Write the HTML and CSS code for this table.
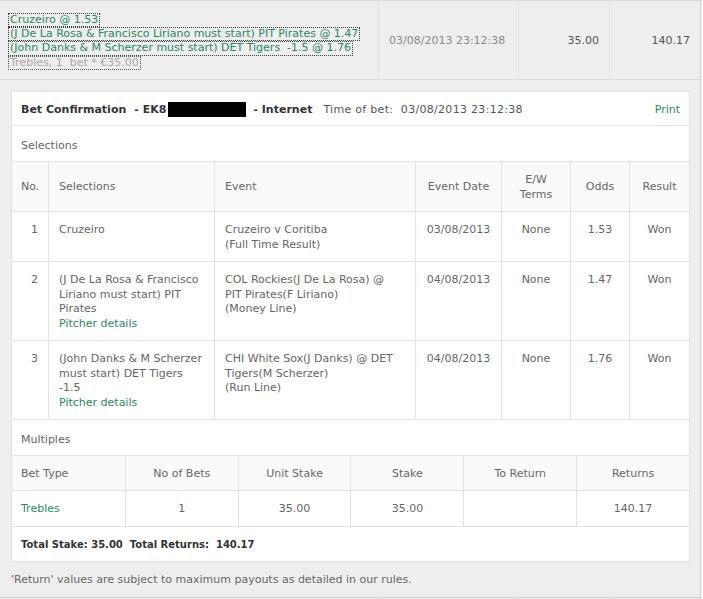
FILE: index.html
```html
<!DOCTYPE html>
<html lang="en">
<head>
<meta charset="utf-8">
<title>Bet history</title>
<link rel="stylesheet" href="styles.css">
</head>
<body>
<div class="board">
  <table class="bets">
    <colgroup>
      <col class="c-legs"><col class="c-date"><col class="c-amt"><col class="c-amt">
    </colgroup>
    <tr class="summary">
      <td class="legs">
        <a class="leg" href="#">Cruzeiro @ 1.53</a>
        <a class="leg" href="#">(J De La Rosa &amp; Francisco Liriano must start) PIT Pirates @ 1.47</a>
        <a class="leg" href="#">(John Danks &amp; M Scherzer must start) DET Tigers &nbsp;-1.5 @ 1.76</a>
        <span class="leg leg-type">Trebles, 1 &nbsp;bet * €35.00</span>
      </td>
      <td class="when">03/08/2013 23:12:38</td>
      <td class="amt">35.00</td>
      <td class="amt">140.17</td>
    </tr>
    <tr class="detail">
      <td colspan="4" class="detail-cell">
        <div class="confirm">
          <div class="confirm-head">
            <div class="title">
              <b>Bet Confirmation</b><b class="ref">- EK8</b><span class="redact"></span><b>- Internet</b><span class="time">Time of bet:&nbsp; 03/08/2013 23:12:38</span>
            </div>
            <a class="print" href="#">Print</a>
          </div>

          <div class="label">Selections</div>
          <table class="grid sel">
            <colgroup>
              <col class="w-no"><col class="w-sel"><col class="w-ev"><col class="w-date"><col class="w-ew"><col class="w-odds"><col class="w-res">
            </colgroup>
            <thead>
              <tr>
                <th class="left">No.</th>
                <th class="left">Selections</th>
                <th class="left">Event</th>
                <th>Event Date</th>
                <th>E/W<br>Terms</th>
                <th>Odds</th>
                <th>Result</th>
              </tr>
            </thead>
            <tbody>
              <tr>
                <td class="no">1</td>
                <td class="left">Cruzeiro</td>
                <td class="left">Cruzeiro v Coritiba<br>(Full Time Result)</td>
                <td>03/08/2013</td>
                <td>None</td>
                <td>1.53</td>
                <td>Won</td>
              </tr>
              <tr>
                <td class="no">2</td>
                <td class="left">(J De La Rosa &amp; Francisco Liriano must start) PIT Pirates<br><a class="link" href="#">Pitcher details</a></td>
                <td class="left">COL Rockies(J De La Rosa) @<br>PIT Pirates(F Liriano)<br>(Money Line)</td>
                <td>04/08/2013</td>
                <td>None</td>
                <td>1.47</td>
                <td>Won</td>
              </tr>
              <tr>
                <td class="no">3</td>
                <td class="left">(John Danks &amp; M Scherzer must start) DET Tigers<br>-1.5<br><a class="link" href="#">Pitcher details</a></td>
                <td class="left">CHI White Sox(J Danks) @ DET Tigers(M Scherzer)<br>(Run Line)</td>
                <td>04/08/2013</td>
                <td>None</td>
                <td>1.76</td>
                <td>Won</td>
              </tr>
            </tbody>
          </table>

          <div class="label">Multiples</div>
          <table class="grid mult">
            <thead>
              <tr class="mh">
                <th class="left">Bet Type</th>
                <th>No of Bets</th>
                <th>Unit Stake</th>
                <th>Stake</th>
                <th>To Return</th>
                <th>Returns</th>
              </tr>
            </thead>
            <tbody>
              <tr class="md">
                <td class="left"><a class="link" href="#">Trebles</a></td>
                <td>1</td>
                <td>35.00</td>
                <td>35.00</td>
                <td></td>
                <td>140.17</td>
              </tr>
            </tbody>
          </table>

          <div class="totals">Total Stake: 35.00&nbsp; Total Returns:&nbsp; 140.17</div>
        </div>
        <p class="note">'Return' values are subject to maximum payouts as detailed in our rules.</p>
      </td>
    </tr>
    <tr class="next">
      <td></td><td></td><td></td><td></td>
    </tr>
  </table>
</div>
</body>
</html>
```

FILE: styles.css
```css
* {
  box-sizing: border-box;
}

html,
body {
  margin: 0;
  padding: 0;
}

body {
  height: 599px;
  overflow: hidden;
  background: #f7f7f7;
  font-family: "DejaVu Sans", Verdana, sans-serif;
  font-size: 11px;
  color: #666;
}

a {
  text-decoration: none;
}

.board {
  width: 701px;
  border-right: 1px solid #d2d2d2;
  background: #eeeeee;
}

.bets {
  width: 700px;
  border-collapse: separate;
  border-spacing: 0;
  table-layout: fixed;
}

.c-legs { width: 378px; }
.c-date { width: 140px; }
.c-amt { width: 91px; }

.summary {
  height: 80px;
}

.summary td {
  border-top: 1px solid #d9d9d9;
  border-bottom: 1px solid #dcdcdc;
  border-left: 1px solid #e2e2e2;
  vertical-align: middle;
  padding: 1px 10px 0;
}

.summary td.legs {
  border-left: 0;
  vertical-align: top;
  padding: 12px 0 0 8px;
}

.leg {
  display: table;
  border: 1px dotted #3c3c3c;
  padding: 0 1px;
  line-height: 12.2px;
  color: #1f8b62;
  white-space: nowrap;
}

.leg-type {
  color: #a8a8a8;
  border-color: #555;
}

.when {
  color: #8a8a8a;
}

.amt {
  text-align: right;
  color: #555;
}

.detail-cell {
  padding: 11px 10px 0 11px;
  vertical-align: top;
}

.confirm {
  background: #fff;
  border: 1px solid #e0e0e0;
}

.confirm-head {
  display: flex;
  align-items: center;
  justify-content: space-between;
  height: 34px;
  padding: 1px 9px 0;
  border-bottom: 1px solid #e6e6e6;
}

.title {
  display: flex;
  align-items: center;
  white-space: nowrap;
}

.title b {
  color: #333;
}

.title .ref {
  margin-left: 8px;
}

.redact {
  display: inline-block;
  width: 78px;
  height: 15px;
  margin: 0 7px 0 2px;
  background: #000;
}

.time {
  margin-left: 11px;
  letter-spacing: 0.3px;
  color: #555;
}

.print {
  color: #1f8b62;
}

.link {
  color: #1f8b62;
}

.label {
  display: flex;
  align-items: center;
  height: 36px;
  padding: 3px 9px 0;
  border-bottom: 1px solid #e3e3e3;
}

.grid {
  width: 100%;
  border-collapse: separate;
  border-spacing: 0;
  table-layout: fixed;
}

.grid th,
.grid td {
  border-bottom: 1px solid #e3e3e3;
  border-left: 1px solid #e3e3e3;
  padding: 11px 10px 9px;
  line-height: 14.5px;
  font-weight: normal;
  color: #666;
  text-align: center;
}

.grid th:first-child,
.grid td:first-child {
  border-left: 0;
  padding-left: 9px;
}

.grid th {
  background: #fafafa;
  vertical-align: middle;
}

.grid td {
  vertical-align: top;
}

.grid .left {
  text-align: left;
}

.grid td.no {
  text-align: right;
  padding-right: 10px;
}

.w-no { width: 36px; }
.w-sel { width: 166px; }
.w-ev { width: 201px; }
.w-date { width: 86px; }
.w-ew { width: 69px; }
.w-odds { width: 59px; }
.w-res { width: 60px; }

.mult th,
.mult td {
  padding-top: 2px;
  padding-bottom: 0;
  vertical-align: middle;
}

.mult .mh {
  height: 35px;
}

.mult .md {
  height: 36px;
}

.totals {
  display: flex;
  align-items: center;
  height: 34px;
  padding: 1px 9px 0;
  font-size: 10px;
  font-weight: bold;
  color: #333;
  white-space: pre;
}

.note {
  margin: 0;
  padding: 11px 0 9px 0;
  line-height: 14.7px;
  color: #666;
}

.next {
  height: 30px;
}

.next td {
  border-top: 1px solid #d0d0d0;
  border-left: 1px solid #e2e2e2;
}

.next td:first-child {
  border-left: 0;
}
```
